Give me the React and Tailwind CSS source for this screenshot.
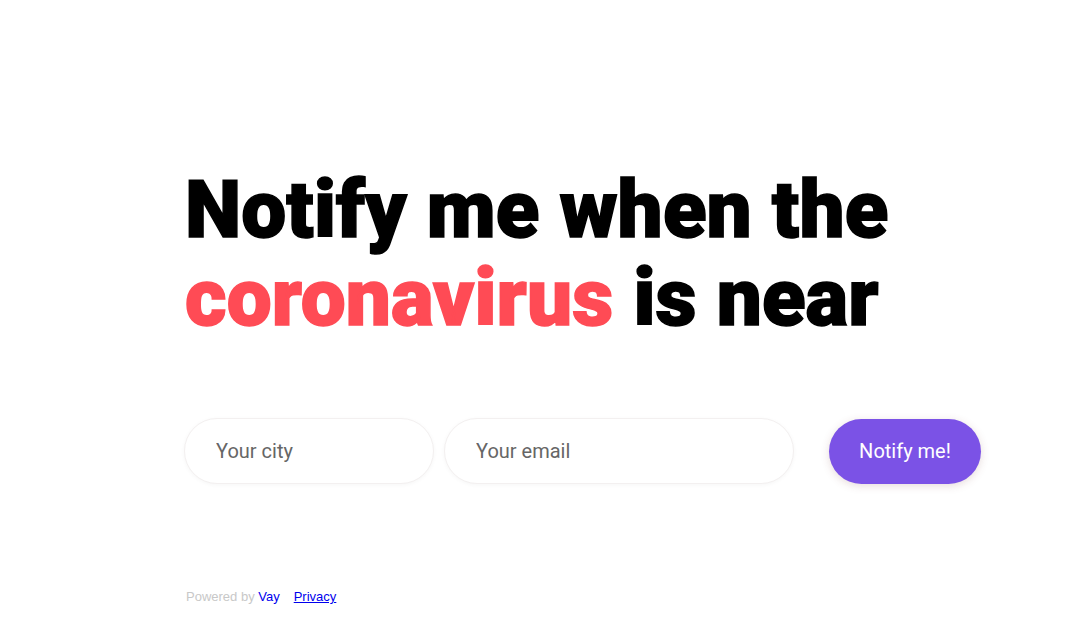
export default function App() {
  return (
    <div className="min-h-screen bg-white" style={{ fontFamily: "Roboto, 'Noto Sans', sans-serif" }}>
      <div className="pl-[184px] pt-[166px]">
        <h1 className="text-[80px] leading-[88px] font-black text-black pl-[1px] [-webkit-text-stroke:1.5px_currentColor] tracking-[0.1px]">
          Notify me when the
          <br />
          <span className="text-[#ff4b55]">coronavirus</span> is near
        </h1>
        <div className="mt-[76px] flex items-center">
          <input
            placeholder="Your city"
            className="w-[250px] h-[66px] rounded-full border border-[#f3f0f0] bg-white px-[31px] text-[20px] text-[#555] placeholder:text-[#666] outline-none shadow-[0_1px_4px_rgba(0,0,0,0.04)]"
          />
          <input
            placeholder="Your email"
            className="ml-[10px] w-[350px] h-[66px] rounded-full border border-[#f3f0f0] bg-white px-[31px] text-[20px] text-[#555] placeholder:text-[#666] outline-none shadow-[0_1px_4px_rgba(0,0,0,0.04)]"
          />
          <button className="ml-[35px] w-[152px] h-[65px] rounded-full bg-[#7b52e6] text-white text-[20px] shadow-[0_2px_8px_rgba(120,60,60,0.18)]">
            Notify me!
          </button>
        </div>
        <div className="mt-[105px] text-[13px] leading-[16px] pl-[2px]" style={{ fontFamily: "'Liberation Sans', Arial, sans-serif" }}>
          <span className="text-[#c8c8c8]">Powered by </span>
          <a href="#" className="text-[#0000ee]">Vay</a>
          <a href="#" className="ml-[14px] text-[#0000ee] underline">Privacy</a>
        </div>
      </div>
    </div>
  );
}
